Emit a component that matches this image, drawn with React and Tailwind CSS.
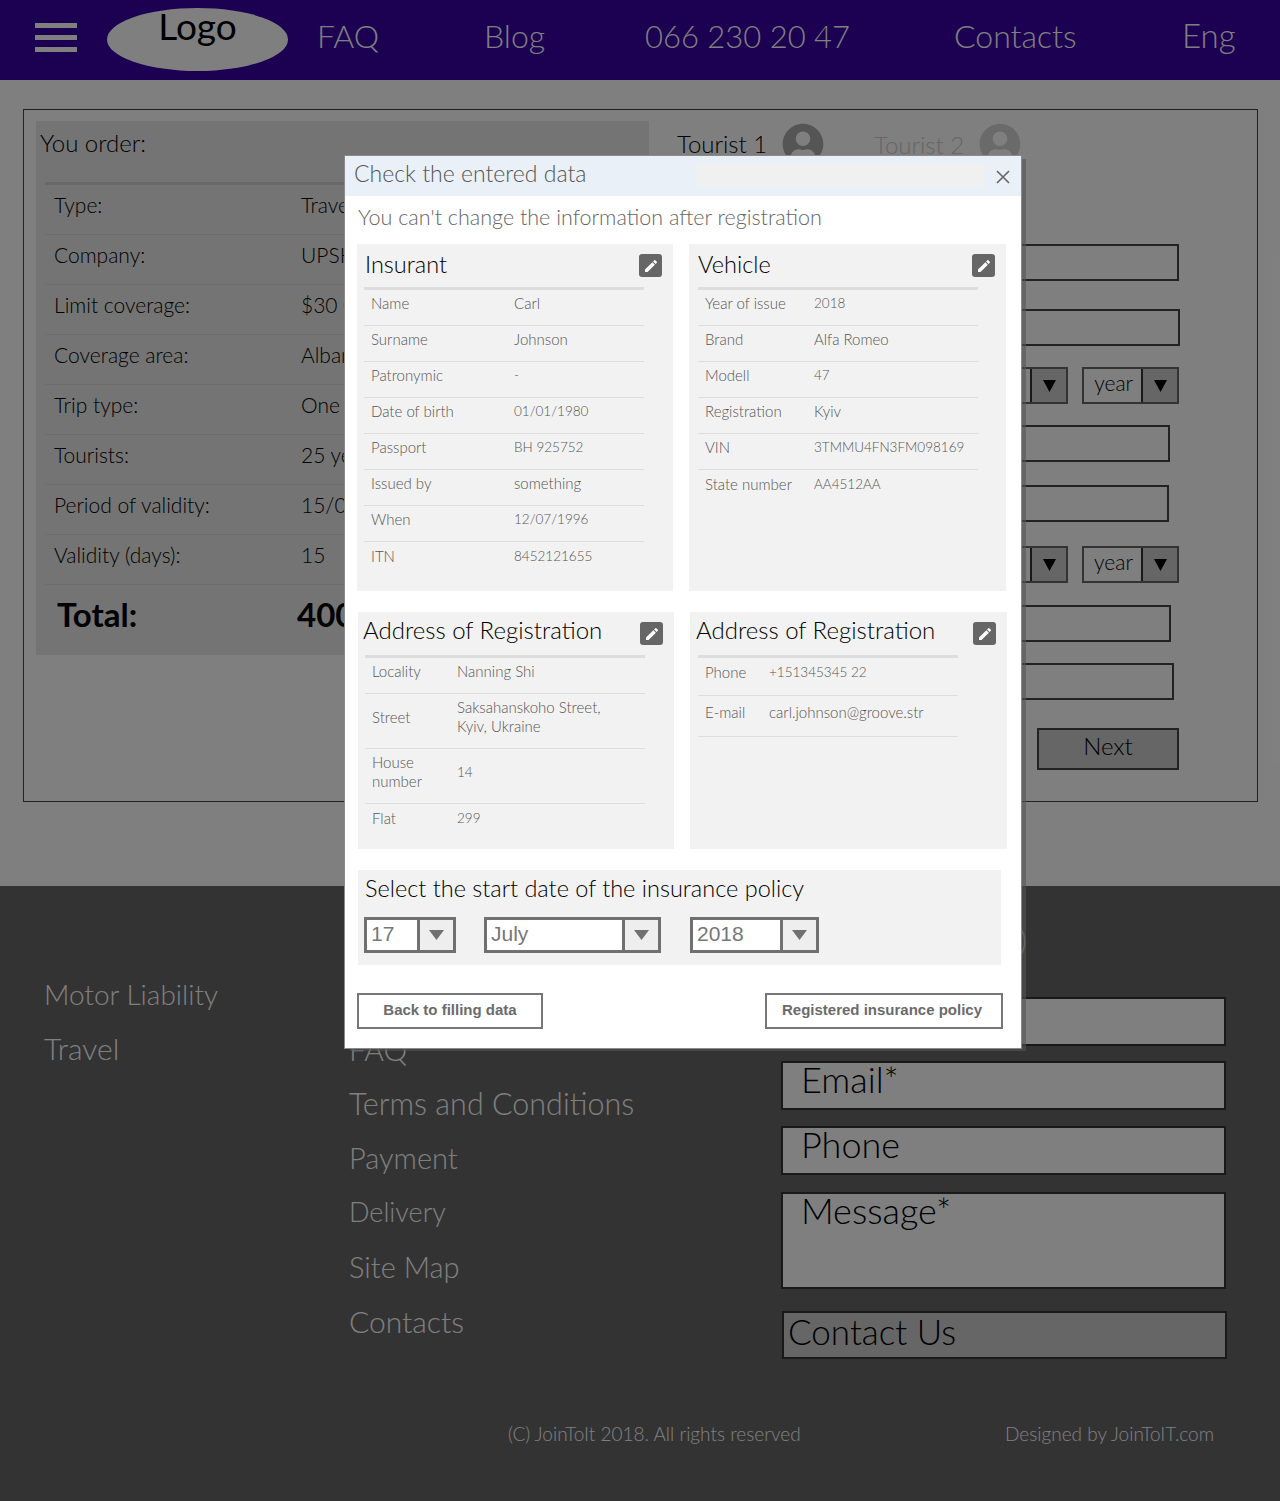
import { FaUserCircle } from "react-icons/fa";
import { MdEdit } from "react-icons/md";

/* ---------------- Datos ---------------- */
const NAV = [
  { text: "FAQ", cls: "w-[167px]" },
  { text: "Blog", cls: "w-[161px]" },
  { text: "066 230 20 47", cls: "w-[309px] text-[31px]" },
  { text: "Contacts", cls: "w-[228px]" },
  { text: "Eng", cls: "text-[33px]" },
];

const ORDER = [
  ["Type:", "Travel"],
  ["Company:", "UPSK"],
  ["Limit coverage:", "$30 000"],
  ["Coverage area:", "Albania"],
  ["Trip type:", "One trip"],
  ["Tourists:", "25 years"],
  ["Period of validity:", "15/07/2018"],
  ["Validity (days):", "15"],
];

const INSURANT = [
  ["Name", "Carl"],
  ["Surname", "Johnson"],
  ["Patronymic", "-"],
  ["Date of birth", "01/01/1980"],
  ["Passport", "BH 925752"],
  ["Issued by", "something"],
  ["When", "12/07/1996"],
  ["ITN", "8452121655"],
];

const VEHICLE = [
  ["Year of issue", "2018"],
  ["Brand", "Alfa Romeo"],
  ["Modell", "47"],
  ["Registration", "Kyiv"],
  ["VIN", "3TMMU4FN3FM098169"],
  ["State number", "AA4512AA"],
];

const ADDRESS = [
  ["Locality", "Nanning Shi"],
  ["Street", <>Saksahanskoho Street,<br />Kyiv, Ukraine</>],
  ["House number", "14"],
  ["Flat", "299"],
];

const CONTACT = [
  ["Phone", "+151345345 22"],
  ["E-mail", "carl.johnson@groove.str"],
];

const FOOTER_LEFT = [
  { text: "Motor Liability", cls: "text-[28px]" },
  { text: "Travel", cls: "" },
];

const FOOTER_MID = [
  { text: "About us", cls: "" },
  { text: "FAQ", cls: "" },
  { text: "Terms and Conditions", cls: "text-[30.5px]" },
  { text: "Payment", cls: "text-[29px]" },
  { text: "Delivery", cls: "text-[27px]" },
  { text: "Site Map", cls: "text-[29px]" },
  { text: "Contacts", cls: "" },
];

/* ---------------- Piezas ---------------- */
function DataCard({ title, rows, labelWidth, lineWidth, rowHeights, lastLine, titleClass = "", className = "" }) {
  return (
    <div className={`h-full bg-[#f2f2f2] ${className}`}>
      <div className="flex h-[43px] items-center justify-between pl-[8px] pr-[11px]">
        <span className={`leading-none text-black ${titleClass}`}>{title}</span>
        <span className="flex h-[23px] w-[23px] items-center justify-center rounded-[3px] bg-[#666]">
          <MdEdit className="text-white" size={16} />
        </span>
      </div>
      <div className="ml-[7px] border-t-[3px] border-[#ddd]" style={{ width: lineWidth }}>
        {rows.map(([label, value], i) => {
          const numeric = typeof value === "string" && /^[\dA-Z\s+/-]+$/.test(value);
          return (
            <div
              key={label}
              className={`flex items-center pb-[12px] pt-[4px] text-[15px] leading-[19px] text-[#555] ${
                i < rows.length - 1 || lastLine ? "border-b border-[#ddd]" : ""
              }`}
              style={{ minHeight: rowHeights ? rowHeights[i] : 36 }}
            >
              <span className="shrink-0 pl-[7px]" style={{ width: labelWidth }}>
                {label}
              </span>
              <span className={numeric ? "text-[13.5px]" : ""}>{value}</span>
            </div>
          );
        })}
      </div>
    </div>
  );
}

function DateSelect({ value, width }) {
  return (
    <div
      className="flex h-[36px] border-[3px] border-[#707070] bg-white [font-family:'Liberation_Sans',sans-serif] text-[21px] font-normal text-[#777]"
      style={{ width }}
    >
      <span className="flex-1 pl-[4px] leading-[28px]">{value}</span>
      <span className="flex w-[36px] items-center justify-center border-l-[3px] border-[#707070] bg-[#eee]">
        <svg width="15" height="10" viewBox="0 0 15 10">
          <path d="M0 0h15L7.5 10z" fill="#707070" />
        </svg>
      </span>
    </div>
  );
}

function SketchInput({ className }) {
  return <div className={`h-[37px] border-2 border-[#444] ${className}`} />;
}

function SketchSelect({ width, label }) {
  return (
    <div className="flex h-[37px] border-2 border-[#666]" style={{ width }}>
      <span className="flex-1 pb-[4px] pl-[10px] text-[21px] leading-[28px] text-black">{label}</span>
      <span className="flex w-[36px] items-center justify-center border-l-2 border-[#333] bg-[#ccc]">
        <svg width="13" height="12" viewBox="0 0 13 12">
          <path d="M0 0h13L6.5 12z" fill="#000" />
        </svg>
      </span>
    </div>
  );
}

function FooterInput({ label, className }) {
  return (
    <div className={`border-2 border-[#333] bg-white pl-[18px] text-[36px] leading-[32px] text-black ${className}`}>
      {label}
    </div>
  );
}

/* ---------------- Pagina ---------------- */
export default function App() {
  return (
    <div className="relative h-[1501px] w-[1280px] overflow-hidden bg-white [font-family:Lato,sans-serif] font-light">
      {/* ---- Header ---- */}
      <header className="flex h-[80px] items-center bg-[#3800a4] pl-[35px]">
        <div className="flex w-[42px] -translate-y-[3px] flex-col gap-[7px]">
          <span className="h-[5px] bg-white" />
          <span className="h-[5px] bg-white" />
          <span className="h-[5px] bg-white" />
        </div>
        <div className="ml-[30px] flex h-[63px] w-[181px] -translate-y-[1px] justify-center rounded-[50%] bg-white text-[37px] font-normal leading-[36px] text-black">
          Logo
        </div>
        <nav className="ml-[29px] flex h-[40px] -translate-y-[4px] items-center text-[32px] text-white">
          {NAV.map((item) => (
            <span key={item.text} className={item.cls}>
              {item.text}
            </span>
          ))}
        </nav>
      </header>

      {/* ---- Contenido ---- */}
      <main className="h-[806px] pt-[29px] pl-[23px]">
        <div className="flex h-[693px] w-[1235px] border border-[#444] pl-[12px] pt-[11px]">
          <section className="h-[534px] w-[613px] bg-[#e8e8e8] pl-[9px]">
            <h2 className="-ml-[5px] flex h-[61px] items-center pb-[18px] text-[24px] text-black">You order:</h2>
            <div className="w-[600px] border-t-[3px] border-[#d0d0d0]">
              {ORDER.map(([label, value]) => (
                <div key={label} className="flex h-[50px] items-center border-b border-[#dadada] pb-[10px] pl-[9px] text-[21px] text-black">
                  <span className="w-[247px]">{label}</span>
                  <span>{value}</span>
                </div>
              ))}
            </div>
            <div className="flex h-[60px] items-center pl-[12px] text-[33px] font-bold text-black">
              <span className="w-[240px]">Total:</span>
              <span>400 $</span>
            </div>
          </section>

          <section className="ml-[28px] mt-[2px] flex w-[502px] flex-col">
            <div className="flex h-[42px] items-center text-[24px]">
              <span className="w-[105px] text-black">Tourist 1</span>
              <FaUserCircle className="text-[#aaa]" size={42} />
              <span className="ml-[50px] w-[105px] pt-[2px] text-[#ccc]">Tourist 2</span>
              <FaUserCircle className="text-[#d4d4d4]" size={42} />
            </div>
            <SketchInput className="mt-[79px] w-[502px]" />
            <SketchInput className="mt-[28px] w-[503px]" />
            <div className="mt-[21px] flex gap-[14px]">
              <SketchSelect width="392px" />
              <SketchSelect width="97px" label="year" />
            </div>
            <SketchInput className="mt-[21px] w-[493px]" />
            <SketchInput className="mt-[23px] w-[492px]" />
            <div className="mt-[24px] flex gap-[14px]">
              <SketchSelect width="391px" />
              <SketchSelect width="97px" label="year" />
            </div>
            <SketchInput className="mt-[22px] w-[494px]" />
            <SketchInput className="mt-[21px] w-[497px]" />
            <div className="ml-[360px] mt-[28px] flex h-[42px] w-[142px] items-center justify-center border-2 border-[#444] bg-[#ccc] pb-[6px] text-[24px] text-black">
              Next
            </div>
          </section>
        </div>
      </main>

      {/* ---- Footer ---- */}
      <footer className="h-[615px] bg-[#666] pt-[30px] text-[30px] text-white">
        <div className="flex">
          <ul className="ml-[44px] mt-[51px] w-[305px]">
            {FOOTER_LEFT.map((item) => (
              <li key={item.text} className={`h-[54px] leading-[54px] ${item.cls}`}>{item.text}</li>
            ))}
          </ul>
          <ul className="mt-[51px] w-[432px]">
            {FOOTER_MID.map((item) => (
              <li key={item.text} className={`h-[54.5px] leading-[54px] ${item.cls}`}>{item.text}</li>
            ))}
          </ul>
          <div className="flex w-[446px] flex-col">
            <h3 className="h-[40px] w-[246px] text-right leading-[46px]">Write to us (form)</h3>
            <FooterInput label="Name*" className="mt-[41px] h-[49px] w-[445px]" />
            <FooterInput label="Email*" className="mt-[15px] h-[49px] w-[445px]" />
            <FooterInput label="Phone" className="mt-[16px] h-[49px] w-[445px]" />
            <FooterInput label="Message*" className="mt-[17px] h-[97px] w-[445px]" />
            <div className="ml-[1px] mt-[22px] h-[48px] w-[445px] border-2 border-[#333] bg-[#ccc] pl-[4px] text-[35px] leading-[36px] text-black">
              Contact Us
            </div>
          </div>
        </div>
        <div className="mt-[61px] flex text-[19px]">
          <span className="ml-[508px] w-[497px]">(C) JoinToIt 2018. All rights reserved</span>
          <span>Designed by JoinToIT.com</span>
        </div>
      </footer>

      {/* ---- Fondo del modal ---- */}
      <div className="absolute inset-0 bg-black/50" />

      {/* ---- Modal ---- */}
      <div className="absolute left-[345px] top-[156px] h-[892px] w-[676px] bg-white shadow-[0_0_0_1px_#8a8a8a,5px_3px_0_0_rgba(85,85,85,0.6)]">
        <div className="flex h-[40px] items-center bg-[#e9f0f7] pl-[9px] pr-[10px]">
          <span className="w-[341px] pb-[6px] text-[23px] text-[#555]">Check the entered data</span>
          <span className="h-[22px] w-[290px] -translate-y-[1px] bg-[#f0f0f0]" />
          <svg className="ml-[11px] mt-[1px]" width="14" height="14" viewBox="0 0 14 14" stroke="#666" strokeWidth="1.6">
            <path d="M1 1l12 12M13 1L1 13" />
          </svg>
        </div>
        <p className="flex h-[48px] items-center pb-[6px] pl-[13px] text-[21.5px] text-[#666]">You can't change the information after registration</p>

        <div className="ml-[12px] grid h-[347px] grid-cols-[316px_317px] gap-[16px]">
          <DataCard title="Insurant" rows={INSURANT} labelWidth="150px" lineWidth="280px" titleClass="-translate-y-[1px] text-[23.5px]" />
          <DataCard title="Vehicle" rows={VEHICLE} labelWidth="116px" lineWidth="280px" titleClass="-translate-x-[1px] -translate-y-[1px] text-[23.5px]" className="pl-[2px]" />
        </div>

        <div className="ml-[13px] mt-[21px] grid h-[237px] grid-cols-[316px_317px] gap-[16px]">
          <DataCard title="Address of Registration" rows={ADDRESS} labelWidth="92px" lineWidth="280px" titleClass="-translate-x-[3px] -translate-y-[4px] text-[24px]" />
          <DataCard title="Address of Registration" rows={CONTACT} labelWidth="71px" lineWidth="260px" rowHeights={[38, 41]} lastLine titleClass="-translate-x-[3px] -translate-y-[4px] text-[24px]" className="pl-[1px]" />
        </div>

        <div className="ml-[13px] mt-[21px] h-[95px] w-[643px] bg-[#f2f2f2] pl-[6px]">
          <div className="flex h-[47px] items-center pb-[10px] pl-[1px] text-[23.5px] text-black">Select the start date of the insurance policy</div>
          <div className="flex">
            <DateSelect value="17" width="92px" />
            <div className="ml-[28px]">
              <DateSelect value="July" width="177px" />
            </div>
            <div className="ml-[29px]">
              <DateSelect value="2018" width="129px" />
            </div>
          </div>
        </div>

        <div className="ml-[12px] mt-[28px] flex w-[646px] justify-between [font-family:'Liberation_Sans',sans-serif] text-[15px] font-bold text-[#6b6b6b]">
          <span className="flex h-[36px] w-[186px] items-center justify-center border-2 border-[#777] pb-[2px]">Back to filling data</span>
          <span className="flex h-[36px] w-[238px] items-center justify-center border-2 border-[#777] pb-[2px] pr-[4px]">Registered insurance policy</span>
        </div>
      </div>
    </div>
  );
}
